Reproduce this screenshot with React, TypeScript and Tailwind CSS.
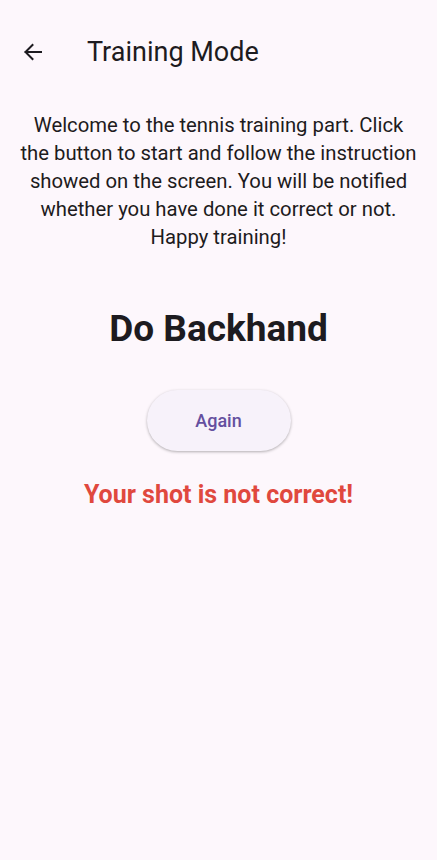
import React from "react";

export default function App() {
  return (
    <div
      className="w-[437px] h-[860px] bg-[#fdf7fc] flex flex-col"
      style={{ fontFamily: "Roboto, 'Noto Sans', sans-serif" }}
    >
      <div className="h-[64px] mt-[20px] flex items-center">
        <div className="w-[64px] flex items-center justify-center pl-[2px]">
          <svg width="24" height="24" viewBox="0 0 24 24" fill="none">
            <path d="M20 12H4.5M11.5 5L4.5 12L11.5 19" stroke="#1d1b20" strokeWidth="2" strokeLinecap="square" />
          </svg>
        </div>
        <div className="ml-[23px] text-[27px] text-[#1d1b20] leading-none">Training Mode</div>
      </div>
      <div className="mt-[27px] px-[4px] text-center text-[20.3px] leading-[28px] text-[#1d1b20] whitespace-nowrap">
        Welcome to the tennis training part. Click
        <br />
        the button to start and follow the instruction
        <br />
        showed on the screen. You will be notified
        <br />
        whether you have done it correct or not.
        <br />
        Happy training!
      </div>
      <div className="mt-[56px] text-center text-[37px] font-bold text-[#1d1b20] leading-[44px]">Do Backhand</div>
      <div className="mt-[39px] flex justify-center">
        <div className="w-[144px] h-[61px] rounded-full bg-[#f7f2fa] shadow-[0_1px_3px_rgba(0,0,0,0.3)] flex items-center justify-center text-[18px] font-medium text-[#65509f]">
          Again
        </div>
      </div>
      <div className="mt-[29px] text-center text-[25px] font-bold text-[#e0483e] leading-[30px]">Your shot is not correct!</div>
    </div>
  );
}
